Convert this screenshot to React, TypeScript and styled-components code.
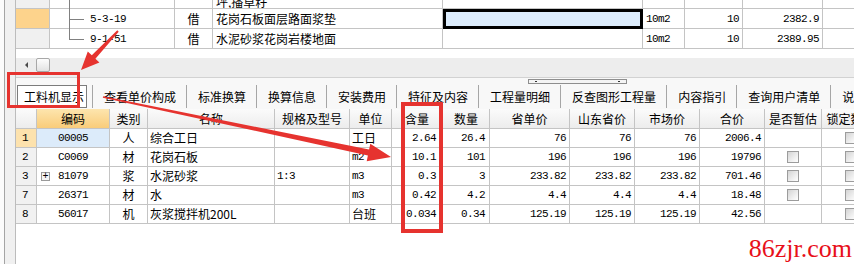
import styled, { createGlobalStyle } from "styled-components";

const GlobalStyle = createGlobalStyle`
    html, body {
        margin: 0;
        padding: 0;
        background: #fff;
    }
    body {
        font-family: "Noto Sans CJK SC", "Liberation Sans", sans-serif;
        font-size: 12px;
        color: #000;
    }
`;

const RED = "#e6332f";
const GRID_LINE = "#c4c4c4";

const Screen = styled.div`
    position: relative;
    width: 854px;
    height: 264px;
    overflow: hidden;
    display: grid;
    grid-template-columns: 16px 1fr;
    background: #fff;
`;

const Frame = styled.div`
    background: linear-gradient(to right, #fbfbfb 0 4px, #a4a4a4 4px 5px, #f0f0f0 5px 15px, #bcbcbc 15px 16px);
`;

const Main = styled.div`
    min-width: 0;
    overflow: hidden;
    display: flex;
    flex-direction: column;
`;

/* ---------- upper grid ---------- */

const TopPanel = styled.div`
    height: 58px;
    background: #fff;
`;

const TopGrid = styled.div`
    display: grid;
    grid-template-columns: 34px 125px 38px 230px 200px 42px 58px 80px 80px;
    grid-template-rows: 9px 20px 20px;
`;

const TopCell = styled.div<{ $align?: "left" | "center" | "right"; $bg?: string; $mono?: boolean; $partial?: boolean }>`
    box-sizing: border-box;
    display: flex;
    align-items: ${p => (p.$partial ? "flex-end" : "center")};
    justify-content: ${p => (p.$align === "right" ? "flex-end" : p.$align === "center" ? "center" : "flex-start")};
    padding: 0 3px;
    border-right: 1px solid ${GRID_LINE};
    border-bottom: 1px solid ${GRID_LINE};
    background: ${p => p.$bg || "#fff"};
    white-space: nowrap;
    overflow: hidden;
    line-height: 12px;
    font-family: ${p => (p.$mono ? '"Liberation Mono", monospace' : '"Noto Sans CJK SC", sans-serif')};
    font-size: ${p => (p.$mono ? "11px" : "12px")};
    letter-spacing: ${p => (p.$mono ? "-0.6px" : "0")};
`;

const SelectedCell = styled.div`
    box-sizing: border-box;
    border: 3px solid #000;
    background: #dcecfc;
`;

const TreeCell = styled.div`
    box-sizing: border-box;
    display: flex;
    align-items: center;
    border-right: 1px solid ${GRID_LINE};
    border-bottom: 1px solid ${GRID_LINE};
    padding-left: 19px;
    font-family: "Liberation Mono", monospace;
    font-size: 11px;
    letter-spacing: -0.6px;
    white-space: nowrap;
`;

const Connector = styled.span<{ $kind: "pass" | "mid" | "last" }>`
    position: relative;
    align-self: stretch;
    flex-shrink: 0;
    width: 15px;
    margin-right: 6px;
    margin-bottom: ${p => (p.$kind === "last" ? "0" : "-1px")};

    &::before {
        content: "";
        position: absolute;
        left: 0;
        top: 0;
        height: ${p => (p.$kind === "last" ? "50%" : "100%")};
        border-left: 1px solid #808080;
    }

    &::after {
        content: "";
        display: ${p => (p.$kind === "pass" ? "none" : "block")};
        position: absolute;
        left: 0;
        right: 0;
        top: 50%;
        border-top: 1px solid #808080;
    }
`;

/* ---------- scroll / splitter / tabs ---------- */

const GrayBand = styled.div`
    height: 20px;
    box-sizing: border-box;
    background: #ededed;
    border-bottom: 1px solid #d2d2d2;
`;

const HScroll = styled.div`
    height: 14px;
    display: flex;
    align-items: center;
    padding-left: 9px;
    gap: 8px;
`;

const ScrollArrow = styled.span`
    width: 0;
    height: 0;
    border-top: 3px solid transparent;
    border-bottom: 3px solid transparent;
    border-right: 3px solid #4a4a4a;
`;

const ScrollThumb = styled.span`
    box-sizing: border-box;
    width: 14px;
    height: 14px;
    border: 1px solid #a8a8a8;
    border-radius: 2px;
    background: linear-gradient(#fdfdfd, #e2e2e2);
`;

const TabArea = styled.div`
    height: 31px;
    background: #f8f8f8;
    display: flex;
    flex-direction: column;
`;

const GripRow = styled.div`
    height: 7px;
    padding-top: 1px;
    box-sizing: border-box;
`;

const Grip = styled.div`
    box-sizing: border-box;
    margin-left: 512px;
    width: 99px;
    height: 5px;
    border: 1px solid #8e8e8e;
    background: #f4f4f4;
    display: flex;
    align-items: center;
    justify-content: space-between;
    padding: 0 6px;
`;

const GripDot = styled.span`
    width: 2px;
    height: 1px;
    background: #333;
`;

const TabStrip = styled.div`
    flex: 1;
    display: flex;
    align-items: stretch;
    white-space: nowrap;
`;

const Tab = styled.div<{ $active?: boolean }>`
    display: flex;
    align-items: center;
    font-size: 12px;
    line-height: 12px;
    box-sizing: border-box;
    ${p =>
        p.$active
            ? `
        margin: 0 5px 1px 1px;
        padding: 0 2px 0 6px;
        border: 1px solid #7c7c7c;
        background: #fff;
    `
            : `
        padding: 0 10px 0 11px;
        border-left: 1px solid #a6a6a6;
        margin-bottom: 1px;
    `}
`;

/* ---------- lower grid ---------- */

const ItemGrid = styled.div`
    display: grid;
    grid-template-columns: 21px 73px 38px 127px 75px 42px 51px 47px 80px 65px 65px 65px 57px 58px;
    grid-template-rows: 20px;
    grid-auto-rows: 19px;
    width: max-content;
`;

const HeadCell = styled.div<{ $hot?: boolean }>`
    box-sizing: border-box;
    display: flex;
    align-items: center;
    justify-content: center;
    border-right: 1px solid ${GRID_LINE};
    border-bottom: 1px solid ${GRID_LINE};
    background: ${p => (p.$hot ? "linear-gradient(#fde5ae, #f9cc7a)" : "linear-gradient(#fbfbfb, #ececec)")};
    font-size: 12px;
    line-height: 12px;
    white-space: nowrap;
    overflow: hidden;
`;

const RowNo = styled.div<{ $current?: boolean }>`
    box-sizing: border-box;
    display: flex;
    align-items: center;
    padding-left: 6px;
    border-right: 1px solid ${GRID_LINE};
    border-bottom: 1px solid ${GRID_LINE};
    background: ${p => (p.$current ? "#fde2ad" : "#f1f1f1")};
    font-family: "Liberation Mono", monospace;
    font-size: 11px;
`;

const Cell = styled.div<{ $align?: "left" | "center" | "right"; $mono?: boolean; $bg?: string; $padR?: number }>`
    box-sizing: border-box;
    display: flex;
    align-items: center;
    justify-content: ${p => (p.$align === "right" ? "flex-end" : p.$align === "center" ? "center" : "flex-start")};
    padding: ${p => (p.$align === "right" ? `0 ${p.$padR ?? 3}px 0 2px` : "0 2px")};
    border-right: 1px solid ${GRID_LINE};
    border-bottom: 1px solid ${GRID_LINE};
    background: ${p => p.$bg || "#fff"};
    white-space: nowrap;
    overflow: hidden;
    line-height: 12px;
    font-family: ${p => (p.$mono ? '"Liberation Mono", monospace' : '"Noto Sans CJK SC", sans-serif')};
    font-size: ${p => (p.$mono ? "11px" : "12px")};
    letter-spacing: ${p => (p.$mono ? "-0.6px" : "0")};
`;

const CodeCell = styled(Cell)`
    display: grid;
    grid-template-columns: 1fr auto 1fr;
    padding: 0 4px;
`;

const Expander = styled.span`
    justify-self: start;
    box-sizing: border-box;
    width: 9px;
    height: 9px;
    border: 1px solid #9a9a9a;
    background: #f4f4f4;
    display: flex;
    align-items: center;
    justify-content: center;
    font-family: "Liberation Mono", monospace;
    font-size: 10px;
    line-height: 7px;
    letter-spacing: 0;
`;

const CheckBox = styled.span`
    box-sizing: border-box;
    width: 12px;
    height: 12px;
    border: 1px solid #9c9c9c;
    background: linear-gradient(135deg, #d4d4d4 0%, #f1f1f1 65%, #fff 100%);
`;

const Footer = styled.div`
    flex: 1;
    display: flex;
    justify-content: flex-end;
    align-items: flex-end;
    padding: 0 2px 2px 0;
`;

const Watermark = styled.span`
    font-family: "Liberation Serif", serif;
    font-size: 26px;
    line-height: 26px;
    color: #e8101a;
`;

/* ---------- annotations ---------- */

const RedBox = styled.div<{ $x: number; $y: number; $w: number; $h: number; $t: number }>`
    position: absolute;
    left: ${p => p.$x}px;
    top: ${p => p.$y}px;
    width: ${p => p.$w}px;
    height: ${p => p.$h}px;
    box-sizing: border-box;
    border: ${p => p.$t}px solid ${RED};
    pointer-events: none;
`;

const Arrows = styled.svg`
    position: absolute;
    left: 0;
    top: 0;
    pointer-events: none;
`;

type Item = {
    no: string;
    code: string;
    kind: string;
    name: string;
    spec: string;
    unit: string;
    content: string;
    qty: string;
    prov: string;
    sd: string;
    market: string;
    total: string;
    est: boolean;
    expand?: boolean;
    current?: boolean;
};

const items: Item[] = [
    { no: "1", code: "00005", kind: "人", name: "综合工日", spec: "", unit: "工日", content: "2.64", qty: "26.4", prov: "76", sd: "76", market: "76", total: "2006.4", est: false, current: true },
    { no: "2", code: "C0069", kind: "材", name: "花岗石板", spec: "", unit: "m2", content: "10.1", qty: "101", prov: "196", sd: "196", market: "196", total: "19796", est: true },
    { no: "3", code: "81079", kind: "浆", name: "水泥砂浆", spec: "1:3", unit: "m3", content: "0.3", qty: "3", prov: "233.82", sd: "233.82", market: "233.82", total: "701.46", est: true, expand: true },
    { no: "7", code: "26371", kind: "材", name: "水", spec: "", unit: "m3", content: "0.42", qty: "4.2", prov: "4.4", sd: "4.4", market: "4.4", total: "18.48", est: true },
    { no: "8", code: "56017", kind: "机", name: "灰浆搅拌机200L", spec: "", unit: "台班", content: "0.034", qty: "0.34", prov: "125.19", sd: "125.19", market: "125.19", total: "42.56", est: false },
];

const headers = ["", "编码", "类别", "名称", "规格及型号", "单位", "含量", "数量", "省单价", "山东省价", "市场价", "合价", "是否暂估", "锁定数量"];

const tabs = ["工料机显示", "查看单价构成", "标准换算", "换算信息", "安装费用", "特征及内容", "工程量明细", "反查图形工程量", "内容指引", "查询用户清单", "说明信息"];

const isAscii = (s: string) => /^[\x20-\x7e]*$/.test(s);

const TopRows = () => (
    <TopGrid>
        <TopCell $partial $bg="#f0f0f0" />
        <TreeCell>
            <Connector $kind="pass" />
        </TreeCell>
        <TopCell $partial />
        <TopCell $partial>坪,播草籽</TopCell>
        <TopCell $partial />
        <TopCell $partial />
        <TopCell $partial />
        <TopCell $partial />
        <TopCell $partial />

        <TopCell $bg="#fdd38c" />
        <TreeCell>
            <Connector $kind="mid" />
            5-3-19
        </TreeCell>
        <TopCell $align="center">借</TopCell>
        <TopCell>花岗石板面层路面浆垫</TopCell>
        <SelectedCell />
        <TopCell $mono>10m2</TopCell>
        <TopCell $mono $align="right">10</TopCell>
        <TopCell $mono $align="right">2382.9</TopCell>
        <TopCell />

        <TopCell $bg="#f0f0f0" />
        <TreeCell>
            <Connector $kind="last" />
            9-1-51
        </TreeCell>
        <TopCell $align="center">借</TopCell>
        <TopCell>水泥砂浆花岗岩楼地面</TopCell>
        <TopCell />
        <TopCell $mono>10m2</TopCell>
        <TopCell $mono $align="right">10</TopCell>
        <TopCell $mono $align="right">2389.95</TopCell>
        <TopCell />
    </TopGrid>
);

export default function App() {
    return (
        <>
            <GlobalStyle />
            <Screen>
                <Frame />
                <Main>
                    <TopPanel>
                        <TopRows />
                    </TopPanel>
                    <GrayBand>
                        <HScroll>
                            <ScrollArrow />
                            <ScrollThumb />
                        </HScroll>
                    </GrayBand>
                    <TabArea>
                        <GripRow>
                            <Grip>
                                <GripDot />
                                <GripDot />
                            </Grip>
                        </GripRow>
                        <TabStrip>
                            {tabs.map((t, i) => (
                                <Tab key={t} $active={i === 0}>
                                    {t}
                                </Tab>
                            ))}
                        </TabStrip>
                    </TabArea>
                    <ItemGrid>
                        {headers.map((h, i) => (
                            <HeadCell key={i} $hot={i === 1}>
                                {h}
                            </HeadCell>
                        ))}
                        {items.map(it => (
                            <div key={it.no} style={{ display: "contents" }}>
                                <RowNo $current={it.current}>{it.no}</RowNo>
                                <CodeCell $mono $bg={it.current ? "#dcebfa" : undefined}>
                                    {it.expand ? <Expander>+</Expander> : <span />}
                                    <span>{it.code}</span>
                                    <span />
                                </CodeCell>
                                <Cell $align="center">{it.kind}</Cell>
                                <Cell>{it.name}</Cell>
                                <Cell $mono>{it.spec}</Cell>
                                <Cell $mono={isAscii(it.unit)}>{it.unit}</Cell>
                                <Cell $mono $align="right" $padR={6}>{it.content}</Cell>
                                <Cell $mono $align="right" $padR={4}>{it.qty}</Cell>
                                <Cell $mono $align="right">{it.prov}</Cell>
                                <Cell $mono $align="right">{it.sd}</Cell>
                                <Cell $mono $align="right">{it.market}</Cell>
                                <Cell $mono $align="right">{it.total}</Cell>
                                <Cell $align="center">{it.est && <CheckBox />}</Cell>
                                <Cell $align="center">
                                    <CheckBox />
                                </Cell>
                            </div>
                        ))}
                    </ItemGrid>
                    <Footer>
                        <Watermark>86zjr.com</Watermark>
                    </Footer>
                </Main>

                <RedBox $x={7} $y={72} $w={73} $h={36} $t={3} />
                <RedBox $x={401} $y={102} $w={42} $h={131} $t={4} />
                <Arrows width={854} height={264} viewBox="0 0 854 264">
                    <polygon
                        fill={RED}
                        points="118.7,31.7 95.4,58.7 99.4,62.6 81,70 87.8,51.4 91.8,55.3 117.3,30.3"
                    />
                    <polygon
                        fill={RED}
                        points="103.2,96.3 369.1,149.6 370.3,143.7 391,157 366.7,161.3 367.9,155.4 102.8,97.7"
                    />
                </Arrows>
            </Screen>
        </>
    );
}
